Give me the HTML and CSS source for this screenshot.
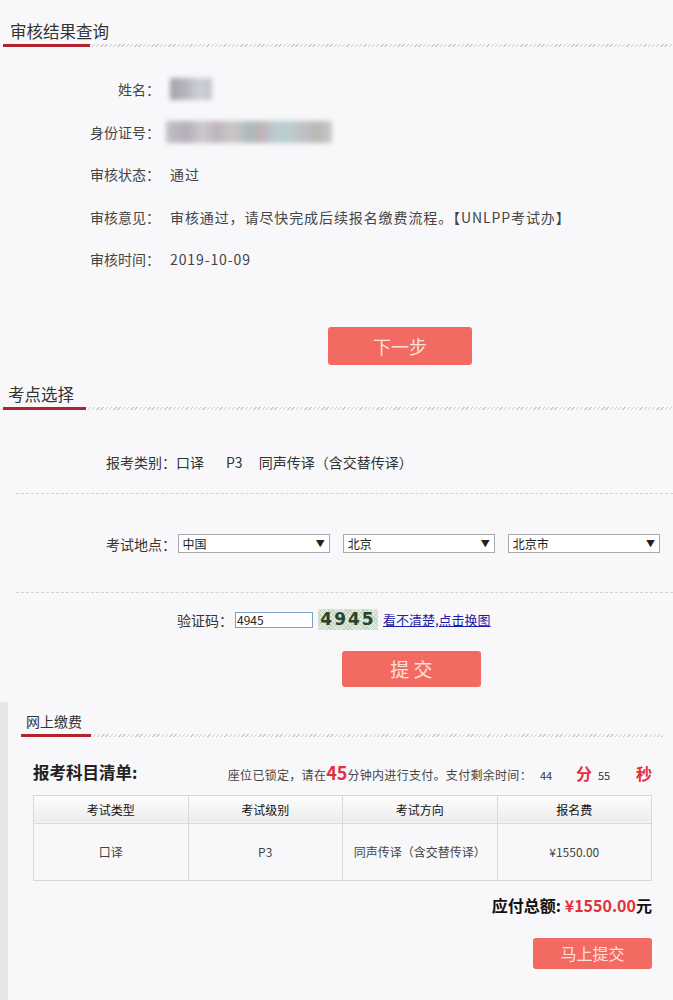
FILE: index.html
```html
<!DOCTYPE html>
<html lang="zh-CN">
<head>
<meta charset="utf-8">
<title>报名</title>
<link rel="stylesheet" href="styles.css">
</head>
<body>
<section class="sec sec-audit">
  <div class="sec-head">
    <h2 class="sec-title title-big">审核结果查询</h2>
    <div class="sec-line"><span class="red-seg seg-1"></span><span class="hatch"></span></div>
  </div>
  <dl class="info">
    <div class="info-row"><dt>姓名：</dt><dd><span class="blur blur-name"></span></dd></div>
    <div class="info-row"><dt>身份证号：</dt><dd><span class="blur blur-id"></span></dd></div>
    <div class="info-row"><dt>审核状态：</dt><dd>通过</dd></div>
    <div class="info-row"><dt>审核意见：</dt><dd>审核通过，请尽快完成后续报名缴费流程。【UNLPP考试办】</dd></div>
    <div class="info-row"><dt>审核时间：</dt><dd>2019-10-09</dd></div>
  </dl>
  <div class="btn-row btn-row-next"><button class="btn btn-next">下一步</button></div>
</section>

<section class="sec sec-site">
  <div class="sec-head">
    <h2 class="sec-title title-big title-site">考点选择</h2>
    <div class="sec-line"><span class="red-seg seg-2"></span><span class="hatch"></span></div>
  </div>
  <div class="cat-row">报考类别：口译<span class="gap-a"></span>P3<span class="gap-b"></span>同声传译（含交替传译）</div>
  <div class="dash"></div>
  <div class="loc-row">
    <span class="loc-label">考试地点：</span>
    <div class="select"><span>中国</span><span class="arrow">▼</span></div>
    <div class="select"><span>北京</span><span class="arrow">▼</span></div>
    <div class="select"><span>北京市</span><span class="arrow">▼</span></div>
  </div>
  <div class="dash dash-2"></div>
  <div class="cap-row">
    <span class="cap-label">验证码：</span>
    <span class="cap-input">4945</span>
    <span class="cap-img">4945</span>
    <a class="cap-link" href="#">看不清楚,点击换图</a>
  </div>
  <div class="btn-row btn-row-submit"><button class="btn btn-submit">提 交</button></div>
</section>

<section class="sec sec-pay">
  <div class="sec-head pay-head">
    <h2 class="sec-title title-small">网上缴费</h2>
    <div class="sec-line"><span class="red-seg seg-3"></span><span class="hatch"></span></div>
  </div>
  <div class="pay-body">
    <div class="pay-summary">
      <span class="pay-list-title">报考科目清单:</span>
      <span class="pay-timer">座位已锁定，请在<b class="red big">45</b>分钟内进行支付。支付剩余时间：<span class="num num-min">44</span><b class="red unit">分</b><span class="num num-sec">55</span><b class="red unit">秒</b></span>
    </div>
    <table class="pay-table">
      <thead>
        <tr><th>考试类型</th><th>考试级别</th><th>考试方向</th><th>报名费</th></tr>
      </thead>
      <tbody>
        <tr><td>口译</td><td>P3</td><td>同声传译（含交替传译）</td><td>¥1550.00</td></tr>
      </tbody>
    </table>
    <div class="pay-total">应付总额: <span class="red">¥1550.00</span>元</div>
    <div class="btn-row btn-row-pay"><button class="btn btn-pay">马上提交</button></div>
  </div>
</section>
</body>
</html>
```

FILE: styles.css
```css
* { box-sizing: border-box; }
html, body { margin: 0; padding: 0; }
body {
  background: #f8f8fa;
  font-family: "Noto Sans CJK SC", "Microsoft YaHei", sans-serif;
  color: #444;
  font-size: 14px;
  width: 673px;
  height: 1000px;
  overflow: hidden;
}

/* section heads */
.sec-head { display: flex; flex-direction: column; }
.sec-title {
  margin: 0;
  font-weight: normal;
  color: #333;
  line-height: 22px;
}
.title-big { font-size: 16.5px; padding-left: 10px; }
.title-site { padding-left: 8px; }
.title-small { font-size: 14px; padding-left: 5px; line-height: 20px; }
.sec-line { display: flex; height: 3px; margin-top: 2px; }
.red-seg { background: #b3222d; display: block; height: 3px; }
.seg-1 { margin-left: 3px; width: 87px; }
.seg-2 { margin-left: 3px; width: 83px; }
.seg-3 { width: 70px; }
.hatch {
  flex: 1;
  background: repeating-linear-gradient(135deg, #cdcdcd 0 1px, transparent 1px 3px);
}

/* section 1 */
.sec-audit { padding-top: 20px; }
.info { margin: 21px 0 0; padding: 0; }
.info-row { display: flex; align-items: center; height: 42.5px; }
.info-row dt { width: 72px; margin-left: 88px; text-align: right; color: #444; }
.info-row dd { margin: 0 0 0 10px; color: #444; letter-spacing: 0.9px; }
.blur { display: block; filter: blur(2.5px); }
.blur-name {
  width: 42px; height: 22px;
  background: linear-gradient(90deg, #8d8a94 0%, #a9a6b3 40%, #c3c7cf 70%, #b4b6bd 100%);
  opacity: 0.8;
}
.blur-id {
  width: 166px; height: 22px; margin-left: -4px;
  background: linear-gradient(90deg, #b9b7bc 0%, #a7a2ad 12%, #c7c0c8 22%, #b2a9b5 30%, #c8bfbf 40%, #9fb0b0 50%, #b8a6a6 57%, #b3bfcd 65%, #aec8c8 72%, #b9b7bc 82%, #aab1a6 92%, #c1c0c4 100%);
  opacity: 0.85;
}

.btn-row { display: flex; }
.btn {
  border: none;
  border-radius: 3px;
  background: #f36a62;
  color: #fde2dc;
  font-family: inherit;
  padding: 0;
  cursor: pointer;
}
.btn-row-next { margin-top: 46px; padding-left: 328px; }
.btn-next { width: 144px; height: 38px; font-size: 18px; }

/* section 2 */
.sec-site { margin-top: 18px; }
.cat-row {
  margin-top: 41px;
  padding-left: 106px;
  line-height: 22px;
  height: 22px;
  color: #333;
}
.gap-a { display: inline-block; width: 22px; }
.gap-b { display: inline-block; width: 16px; }
.dash { margin: 20px 0 0 16px; border-top: 1px dashed #d3d3d3; }
.dash-2 { margin-top: 38px; }
.loc-row {
  margin-top: 40px;
  display: flex;
  align-items: center;
  height: 20px;
  padding-left: 106px;
  color: #333;
}
.loc-label { width: 72px; }
.select {
  display: flex;
  justify-content: space-between;
  align-items: center;
  width: 153px;
  height: 19px;
  margin-right: 13px;
  border: 1px solid #a9a9a9;
  background: #fff;
  font-size: 12px;
  color: #222;
  padding: 0 4px 0 4px;
}
.arrow { font-size: 9px; color: #222; }
.cap-row {
  margin-top: 17px;
  display: flex;
  align-items: center;
  height: 20px;
  padding-left: 177px;
  color: #333;
}
.cap-label { width: 58px; }
.cap-input {
  width: 78px; height: 16px;
  border: 1px solid #7da2ce;
  background: #fff;
  font-size: 12px;
  line-height: 14px;
  padding-left: 1px;
  color: #222;
}
.cap-img {
  margin-left: 5px;
  width: 60px; height: 21px;
  background:
    repeating-linear-gradient(45deg, rgba(150,180,150,0.35) 0 1px, transparent 1px 3px),
    repeating-linear-gradient(-45deg, rgba(170,190,170,0.35) 0 1px, transparent 1px 3px),
    #e4ece2;
  font-family: "DejaVu Sans", sans-serif;
  font-size: 17px;
  font-weight: bold;
  color: #28442a;
  letter-spacing: 2px;
  text-align: center;
  line-height: 21px;
}
.cap-link {
  margin-left: 5px;
  color: #1c1ca8;
  font-size: 13px;
  text-decoration: underline;
}
.btn-row-submit { margin-top: 21px; padding-left: 342px; }
.btn-submit { width: 139px; height: 36px; font-size: 19px; }

/* section 3 */
.sec-pay {
  margin-top: 15px;
  border-left: 8px solid #e6e6e8;
  padding: 9px 10px 40px 0;
}
.pay-head { margin-left: 13px; }
.pay-head .sec-line { margin-top: 3px; }
.pay-body { margin: 0 11px 0 25px; }
.pay-summary {
  margin-top: 23px;
  display: flex;
  justify-content: space-between;
  align-items: center;
  height: 24px;
}
.pay-list-title { font-size: 16.5px; font-weight: bold; color: #222; }
.pay-timer { font-size: 12px; color: #444; display: flex; align-items: baseline; letter-spacing: 0.3px; }
.red { color: #e3303b; }
.big { font-size: 18px; font-weight: bold; letter-spacing: 0; }
.num { font-size: 11px; color: #333; letter-spacing: 0; }
.num-min { width: 44px; padding-left: 8px; }
.num-sec { width: 44px; padding-left: 6px; }
.unit { font-size: 16px; font-weight: bold; letter-spacing: 0; }

.pay-table {
  margin-top: 11px;
  width: 100%;
  border-collapse: collapse;
  border: 1px solid #d3d3d3;
  table-layout: fixed;
  font-size: 12px;
}
.pay-table th, .pay-table td {
  border: 1px solid #d8d8d8;
  text-align: center;
}
.pay-table th {
  height: 28px;
  font-weight: normal;
  color: #111;
  background: linear-gradient(#fdfdfd, #ececec);
}
.pay-table td { height: 57px; color: #444; background: #f8f8fa; }

.pay-total {
  margin-top: 12px;
  text-align: right;
  font-size: 16px;
  font-weight: bold;
  color: #111;
  line-height: 24px;
}
.btn-row-pay { margin-top: 21px; justify-content: flex-end; }
.btn-pay { width: 119px; height: 31px; font-size: 16px; }
```
